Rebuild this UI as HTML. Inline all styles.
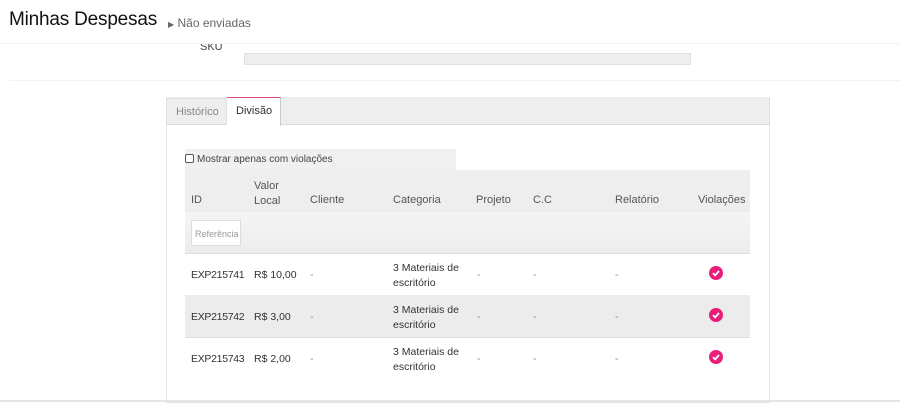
<!DOCTYPE html>
<html><head><meta charset="utf-8"><style>
*{margin:0;padding:0;box-sizing:border-box}
body{width:900px;height:402px;overflow:hidden;background:#fff;font-family:"Liberation Sans",sans-serif;color:#333;position:relative}
.a{position:absolute}
.t{font-size:10.5px;color:#333;white-space:nowrap}
.h{font-size:11px;color:#555}
.chk{width:14px;height:14px;border-radius:50%;background:#e91e7a;display:flex;align-items:center;justify-content:center}
</style></head><body>
<div class="a" style="left:200px;top:41px;font-size:11px;color:#444">SKU</div>
<div class="a" style="left:0;top:0;width:900px;height:43px;background:#fff"></div>
<div class="a" style="left:9px;top:9px;font-size:19px;color:#111;letter-spacing:-0.2px">Minhas Despesas</div>
<div class="a" style="left:168px;top:16px;font-size:12px;color:#666"><span style="font-size:8px">&#9654;</span> Não enviadas</div>
<div class="a" style="left:0;top:43px;width:900px;height:1px;background:#f2f2f2"></div>
<div class="a" style="left:244px;top:53px;width:447px;height:12px;background:#eee;border:1px solid #e2e2e2"></div>
<div class="a" style="left:9px;top:80px;width:891px;height:1px;background:#f2f2f2"></div>
<div class="a" style="left:166px;top:97px;width:604px;height:306px;border:1px solid #dde3ea;border-top:none"></div>
<div class="a" style="left:166px;top:97px;width:604px;height:28px;background:#eee;border-bottom:1px solid #d3dbe6;border-right:1px solid #e0e0e0"></div>
<div class="a" style="left:166px;top:98px;width:61px;height:27px;border:1px solid #e0e0e0;border-bottom:none;font-size:11px;color:#888;padding:7px 0 0 9px">Histórico</div>
<div class="a" style="left:227px;top:97px;width:54px;height:29px;background:#fff;border-top:1px solid #e04a7c;border-right:1px solid #ccc;font-size:11px;color:#333;padding:7px 0 0 9px">Divisão</div>
<div class="a" style="left:185px;top:149px;width:271px;height:21px;background:#f0f0f0;font-size:10px;color:#444;padding:5px 0 0 0"><span style="display:inline-block;width:9px;height:9px;border:1px solid #555;border-radius:2px;vertical-align:-1px;margin-right:3px;background:#fff"></span>Mostrar apenas com violações</div>
<div class="a" style="left:185px;top:170px;width:565px;height:42px;background:#eee"></div>
<div class="a" style="left:185px;top:212px;width:565px;height:41px;background:linear-gradient(#f5f5f5,#ececec)"></div>
<div class="a" style="left:185px;top:295px;width:565px;height:42px;background:#ececec"></div>
<div class="a" style="left:185px;top:253px;width:565px;height:1px;background:#e0e0e0"></div>
<div class="a" style="left:185px;top:337px;width:565px;height:1px;background:#e0e0e0"></div>
<div class="a h" style="left:191px;top:194px">ID</div>
<div class="a h" style="left:254px;top:179px;line-height:15px">Valor<br>Local</div>
<div class="a h" style="left:310px;top:194px">Cliente</div>
<div class="a h" style="left:393px;top:194px">Categoria</div>
<div class="a h" style="left:476px;top:194px">Projeto</div>
<div class="a h" style="left:533px;top:194px">C.C</div>
<div class="a h" style="left:615px;top:194px">Relatório</div>
<div class="a h" style="left:698px;top:194px">Violações</div>
<div class="a" style="left:191px;top:220px;width:50px;height:26px;background:#fff;border:1px solid #ddd;font-size:9px;color:#999;padding:8px 0 0 3px;overflow:hidden;white-space:nowrap">Referência</div>
<div class="a t" style="left:191px;top:269px;letter-spacing:-0.3px">EXP215741</div><div class="a t" style="left:254px;top:269px">R$ 10,00</div>
<div class="a t" style="left:191px;top:311px;letter-spacing:-0.3px">EXP215742</div><div class="a t" style="left:254px;top:311px">R$ 3,00</div>
<div class="a t" style="left:191px;top:353px;letter-spacing:-0.3px">EXP215743</div><div class="a t" style="left:254px;top:353px">R$ 2,00</div>
<div class="a t" style="left:393px;top:261px;line-height:15px">3 Materiais de<br>escritório</div>
<div class="a t" style="left:393px;top:303px;line-height:15px">3 Materiais de<br>escritório</div>
<div class="a t" style="left:393px;top:345px;line-height:15px">3 Materiais de<br>escritório</div>
<div class="a t" style="left:310px;top:269px;color:#888">-</div><div class="a t" style="left:477px;top:269px;color:#888">-</div><div class="a t" style="left:533px;top:269px;color:#888">-</div><div class="a t" style="left:615px;top:269px;color:#888">-</div>
<div class="a t" style="left:310px;top:311px;color:#888">-</div><div class="a t" style="left:477px;top:311px;color:#888">-</div><div class="a t" style="left:533px;top:311px;color:#888">-</div><div class="a t" style="left:615px;top:311px;color:#888">-</div>
<div class="a t" style="left:310px;top:353px;color:#888">-</div><div class="a t" style="left:477px;top:353px;color:#888">-</div><div class="a t" style="left:533px;top:353px;color:#888">-</div><div class="a t" style="left:615px;top:353px;color:#888">-</div>
<div class="a chk" style="left:709px;top:266px"><svg width="10" height="10" viewBox="0 0 10 10"><path d="M2 5.2L4.2 7.3L8 3" stroke="#fff" stroke-width="1.8" fill="none"/></svg></div>
<div class="a chk" style="left:709px;top:308px"><svg width="10" height="10" viewBox="0 0 10 10"><path d="M2 5.2L4.2 7.3L8 3" stroke="#fff" stroke-width="1.8" fill="none"/></svg></div>
<div class="a chk" style="left:709px;top:350px"><svg width="10" height="10" viewBox="0 0 10 10"><path d="M2 5.2L4.2 7.3L8 3" stroke="#fff" stroke-width="1.8" fill="none"/></svg></div>
<div class="a" style="left:0;top:400px;width:900px;height:2px;background:#e5e5e5"></div>
</body></html>
